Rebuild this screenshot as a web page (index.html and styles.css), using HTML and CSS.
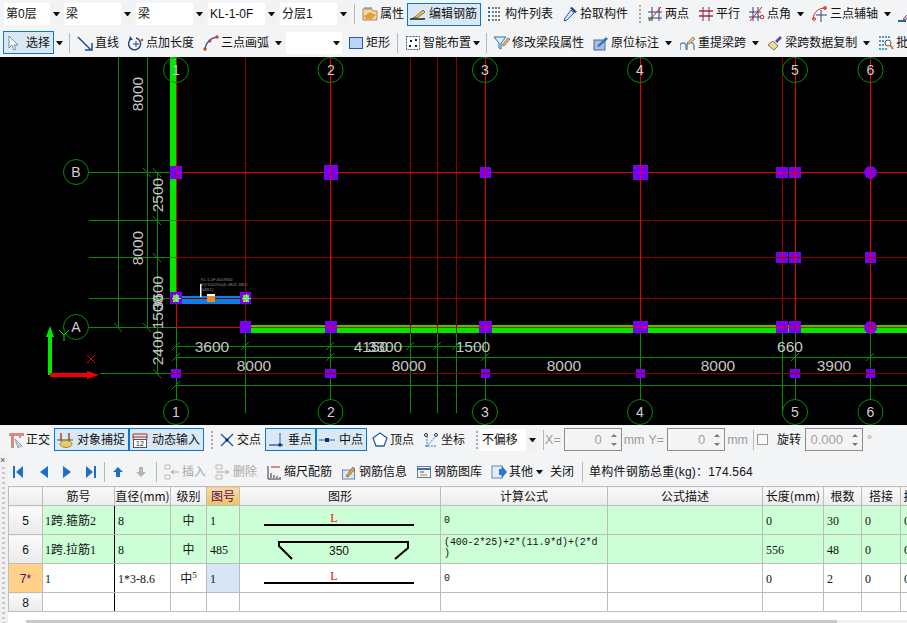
FILE: index.html
```html
<!DOCTYPE html>
<html lang="zh">
<head>
<meta charset="utf-8">
<title>梁 KL-1-0F</title>
<link rel="stylesheet" href="styles.css">
</head>
<body>
<svg class="sprite" xmlns="http://www.w3.org/2000/svg">
  <symbol id="i-prop" viewBox="0 0 16 16"><path d="M1 3h9l1 2h4v9H1z" fill="#f3d9a0" stroke="#a58a5a"/><path d="M2 10l6-4 6 3-4 4H4z" fill="#e0a040"/><path d="M2 2h8" stroke="#777"/></symbol>
  <symbol id="i-edit" viewBox="0 0 16 16"><path d="M0 13h15" stroke="#111" stroke-width="1.4"/><path d="M5 11l8-7 2 2-8 6z" fill="#e8c060" stroke="#7a5a20" stroke-width=".8"/><path d="M2 13l3-2" stroke="#333"/></symbol>
  <symbol id="i-list" viewBox="0 0 16 16"><path d="M5 2h9M5 6h9M5 10h9M5 14h9" stroke="#555" stroke-width="1.4" stroke-dasharray="2 1"/><path d="M1 2h2M1 6h2M1 10h2M1 14h2" stroke="#2f6fb0" stroke-width="2"/></symbol>
  <symbol id="i-drop" viewBox="0 0 16 16"><path d="M10 1l5 5-2 1-5-5z" fill="#1b3a70"/><path d="M9 4l3 3-7 7-3 1 1-3z" fill="#cfe4fa" stroke="#2a5fa0"/></symbol>
  <symbol id="i-two" viewBox="0 0 16 16"><path d="M5 1v14M12 1v14M1 6h14M1 12h14" stroke="#34407a"/><path d="M2 15L14 1" stroke="#d02020"/><circle cx="3" cy="13" r="1.6" fill="#3a9a30"/></symbol>
  <symbol id="i-par" viewBox="0 0 16 16"><path d="M5 1v14M11 1v14" stroke="#34407a"/><path d="M1 5h14M1 10h14" stroke="#c02030" stroke-width="1.3"/></symbol>
  <symbol id="i-ang" viewBox="0 0 16 16"><path d="M4 1v14M9 1v14M0 6h12M0 11h12" stroke="#34407a"/><path d="M1 15L13 1" stroke="#d02020"/><circle cx="13" cy="11" r="1.8" fill="none" stroke="#d02020"/></symbol>
  <symbol id="i-arc3" viewBox="0 0 16 16"><path d="M1 13C2 6 6 2 14 2" fill="none" stroke="#d02020"/><path d="M9 4v12M4 9h11" stroke="#34407a"/><circle cx="13" cy="2" r="1.4" fill="none" stroke="#d02020"/><circle cx="2" cy="13" r="1.4" fill="none" stroke="#d02020"/></symbol>
  <symbol id="i-pen" viewBox="0 0 16 16"><path d="M6 13l7-7 2 2-7 6z" fill="#d8b8c0" stroke="#706080"/><path d="M1 15h8" stroke="#2f5f9f" stroke-width="2"/></symbol>
  <symbol id="i-cursor" viewBox="0 0 16 16"><path d="M3 1v12l3-3 2 5 2-1-2-4h4z" fill="#fff" stroke="#7a8aa0"/></symbol>
  <symbol id="i-line" viewBox="0 0 16 16"><path d="M1 2l13 13" stroke="#1c4f8a" stroke-width="1.5"/><path d="M15 8v7H8" fill="none" stroke="#1c4f8a" stroke-width="1.5"/></symbol>
  <symbol id="i-len" viewBox="0 0 16 16"><path d="M3 4a6 6 0 1 0 5-1" fill="none" stroke="#26456e" stroke-width="1.4"/><path d="M8 6v6M5 9h6" stroke="#26456e"/><path d="M2 1l3 4H1z" fill="#26456e"/><circle cx="14" cy="5" r="1.2" fill="#c04030"/></symbol>
  <symbol id="i-arc" viewBox="0 0 16 16"><path d="M2 14C3 7 8 3 14 2" fill="none" stroke="#2f5f9f" stroke-width="1.3"/><circle cx="14" cy="2" r="1.7" fill="#d04020"/><circle cx="7" cy="6" r="1.5" fill="#d04020"/><circle cx="2" cy="14" r="1.7" fill="#d04020"/></symbol>
  <symbol id="i-rect" viewBox="0 0 16 16"><rect x="1.500" y="2.500" width="13" height="11" fill="#bcd4f4" stroke="#2c58b0"/></symbol>
  <symbol id="i-smart" viewBox="0 0 16 16"><rect x="1.500" y="1.500" width="13" height="13" fill="#fff" stroke="#556" stroke-dasharray="2 1"/><path d="M5 5h2v2H5zM10 4h2v2h-2zM4 10h2v2H4zM10 10h2v2h-2z" fill="#123"/></symbol>
  <symbol id="i-mod" viewBox="0 0 16 16"><path d="M0 2h12L7 8v6l-2-1V8z" fill="#d6ecff" stroke="#2a6fb0"/><path d="M8 10l6-7 2 1-6 7z" fill="#e0c080" stroke="#705020" stroke-width=".7"/></symbol>
  <symbol id="i-mark" viewBox="0 0 16 16"><rect x="1" y="5" width="11" height="10" fill="#a8bede" stroke="#4a6a9a"/><path d="M4 11l9-9 2 2-9 8z" fill="#2f78c8"/></symbol>
  <symbol id="i-span" viewBox="0 0 16 16"><path d="M0 15v-4a3 3 0 0 1 6 0v4M7 15v-4a3 3 0 0 1 7 0v4" fill="none" stroke="#6c8cb0" stroke-width="1.5"/><path d="M7 8l6-6 2 2-6 5z" fill="#e8c890" stroke="#806030" stroke-width=".7"/></symbol>
  <symbol id="i-brush" viewBox="0 0 16 16"><path d="M1 10l5-4 5 5-4 4z" fill="#e8dca0" stroke="#8a7a40"/><path d="M8 6l5-5 2 2-5 5z" fill="#5a4ea0"/></symbol>
  <symbol id="i-batch" viewBox="0 0 16 16"><path d="M1 2h12M1 6h6M1 10h6M1 14h8" stroke="#2f78a8" stroke-width="1.4" stroke-dasharray="2 1"/><circle cx="10" cy="8" r="3" fill="#fff" stroke="#555"/><path d="M12 10l3 4" stroke="#b08030" stroke-width="2"/></symbol>
  <symbol id="i-ortho" viewBox="0 0 16 16"><path d="M1 1h15v3h-3v2h-2V4H6v12H3V4H1z" fill="#d88a80"/><path d="M7 7l7 7-3 1-1 1z" fill="#c8d4e0" stroke="#7a8a9a" stroke-width=".7"/></symbol>
  <symbol id="i-snap" viewBox="0 0 16 16"><path d="M4 1v8M12 1v8" stroke="#a03020" stroke-width="1.3"/><path d="M0 8h16" stroke="#553"/><ellipse cx="9" cy="12" rx="6" ry="3.500" fill="#e8c870" stroke="#a88a30"/></symbol>
  <symbol id="i-input" viewBox="0 0 16 16"><path d="M1 2h14M1 2v5M15 2v5M1 5h14" stroke="#a03020"/><rect x="1.500" y="7.500" width="13" height="8" fill="#fff" stroke="#555"/><text x="8" y="14" class="ictext">12</text></symbol>
  <symbol id="i-cross" viewBox="0 0 16 16"><path d="M2 2l12 12M14 2L2 14" stroke="#2a5fa8" stroke-width="1.500"/><rect x="6.500" y="6.500" width="3" height="3" fill="#1a2a70"/></symbol>
  <symbol id="i-perp" viewBox="0 0 16 16"><path d="M1 13h14" stroke="#2a5fa8" stroke-width="1.400"/><path d="M12 1v13" stroke="#2a5fa8"/><rect x="10.500" y="11.500" width="3" height="3" fill="#1a2a70"/></symbol>
  <symbol id="i-mid" viewBox="0 0 16 16"><path d="M0 8h16" stroke="#5a7fb8" stroke-width="1.400"/><rect x="6" y="6" width="4" height="4" fill="#1a2a70"/></symbol>
  <symbol id="i-vert" viewBox="0 0 16 16"><path d="M8 1l7 5-3 8H4L1 6z" fill="#fff" stroke="#2a5fa8" stroke-width="1.300"/></symbol>
  <symbol id="i-coord" viewBox="0 0 16 16"><path d="M2 14h12M4 15V3M4 14l9-10" stroke="#2a7fc8" stroke-dasharray="2 1"/><circle cx="13" cy="3" r="1.500" fill="none" stroke="#333"/><circle cx="3" cy="3" r="1.500" fill="none" stroke="#333"/></symbol>
  <symbol id="i-ins" viewBox="0 0 16 16"><path d="M1 1h5v4H1zM1 11h5v4H1z" fill="none" stroke="#bbb"/><path d="M15 8H7M10 6L7 8l3 2" fill="none" stroke="#aaa"/></symbol>
  <symbol id="i-del" viewBox="0 0 16 16"><path d="M1 1h6v4H1zM1 11h6v4H1z" fill="none" stroke="#bbb"/><path d="M1 8h12M11 6l3 2-3 2" fill="none" stroke="#aaa"/></symbol>
  <symbol id="i-scale" viewBox="0 0 16 16"><path d="M2 2v13M2 15h13" stroke="#333"/><path d="M5 3h9" stroke="#c02020"/><path d="M5 14V9M8 14v-3M11 14v-2M14 14v-1" stroke="#556" stroke-width="1.200"/></symbol>
  <symbol id="i-info" viewBox="0 0 16 16"><rect x="1.500" y="6" width="12" height="9" fill="#dbe6f2" stroke="#6a86a8"/><path d="M5 12l7-9 2 2-7 8z" fill="#e8a050" stroke="#7a5020" stroke-width=".7"/></symbol>
  <symbol id="i-lib" viewBox="0 0 16 16"><rect x="1.500" y="2.500" width="13" height="11" fill="#eef3f9" stroke="#5a7fa8"/><path d="M2 5h12" stroke="#3a6fa8" stroke-width="2"/><path d="M4 8h4" stroke="#b03020"/><path d="M4 11h7" stroke="#b08a20"/></symbol>
  <symbol id="i-other" viewBox="0 0 16 16"><rect x="1" y="2" width="10" height="12" fill="#e4ecf6" stroke="#6a86a8"/><path d="M8 5h3V2l5 6-5 6v-3H8z" fill="#2f78c8"/></symbol>
</svg>

<div class="bar bar-top">
  <div class="combo w58"><span class="combo-text">第0层</span><span class="combo-btn"><i class="caret"></i></span></div>
  <div class="combo w69 ml2"><span class="combo-text">梁</span><span class="combo-btn"><i class="caret"></i></span></div>
  <div class="combo w69 ml3"><span class="combo-text">梁</span><span class="combo-btn"><i class="caret"></i></span></div>
  <div class="combo w69 ml3"><span class="combo-text">KL-1-0F</span><span class="combo-btn"><i class="caret"></i></span></div>
  <div class="combo w69 ml3"><span class="combo-text">分层1</span><span class="combo-btn"><i class="caret"></i></span></div>
  <i class="sep ml5"></i>
  <span class="tool ml7"><svg class="ic"><use href="#i-prop"/></svg>属性</span>
  <span class="tool active w74 ml3"><svg class="ic"><use href="#i-edit"/></svg>编辑钢筋</span>
  <span class="tool ml6"><svg class="ic"><use href="#i-list"/></svg>构件列表</span>
  <span class="tool ml9"><svg class="ic"><use href="#i-drop"/></svg>拾取构件</span>
  <i class="grip ml11"></i>
  <span class="tool ml6"><svg class="ic"><use href="#i-two"/></svg>两点</span>
  <span class="tool ml9"><svg class="ic"><use href="#i-par"/></svg>平行</span>
  <span class="tool ml9"><svg class="ic"><use href="#i-ang"/></svg>点角</span>
  <i class="caret ml6"></i>
  <span class="tool ml8"><svg class="ic"><use href="#i-arc3"/></svg>三点辅轴</span>
  <i class="caret ml6"></i>
  <span class="tool ml6"><svg class="ic"><use href="#i-pen"/></svg></span>
</div>

<div class="bar bar-second">
  <span class="tool active w51"><svg class="ic"><use href="#i-cursor"/></svg><span class="pad-select">选择</span></span>
  <i class="caret ml2"></i>
  <i class="sep ml6"></i>
  <span class="tool ml7"><svg class="ic"><use href="#i-line"/></svg>直线</span>
  <span class="tool ml9"><svg class="ic"><use href="#i-len"/></svg>点加长度</span>
  <span class="tool ml9"><svg class="ic"><use href="#i-arc"/></svg>三点画弧</span>
  <i class="caret ml6"></i>
  <div class="combo w56 ml4"><span class="combo-text"></span><span class="combo-btn plain"><i class="caret"></i></span></div>
  <span class="tool ml6"><svg class="ic"><use href="#i-rect"/></svg>矩形</span>
  <i class="sep ml7"></i>
  <span class="tool ml7"><svg class="ic"><use href="#i-smart"/></svg>智能布置</span>
  <i class="caret ml2"></i>
  <i class="sep ml6"></i>
  <span class="tool ml7"><svg class="ic"><use href="#i-mod"/></svg>修改梁段属性</span>
  <span class="tool ml9"><svg class="ic"><use href="#i-mark"/></svg>原位标注</span>
  <i class="caret ml6"></i>
  <span class="tool ml8"><svg class="ic"><use href="#i-span"/></svg>重提梁跨</span>
  <i class="caret ml6"></i>
  <span class="tool ml8"><svg class="ic"><use href="#i-brush"/></svg>梁跨数据复制</span>
  <i class="caret ml6"></i>
  <span class="tool ml8"><svg class="ic"><use href="#i-batch"/></svg>批量识别</span>
</div>

<svg class="cad" viewBox="0 57 907 368" xmlns="http://www.w3.org/2000/svg">
  <g class="beam-green">
    <rect x="170" y="57" width="7" height="236"/>
    <rect x="251" y="325" width="656" height="8"/>
  </g>
  <rect class="beam-blue" x="172" y="296" width="76" height="8"/>

  <g class="ln-green">
    <path d="M118.500 57V328M147.500 57V328M157.500 172V375"/>
    <path d="M89 172.500H177M89 220.500H177M89 257.500H177M89 298.500H170M89 327.500H177M100 373.500H177"/>
    <path d="M177 346.500H485M177 357.500H907M177 385.500H907"/>
    <path d="M176.500 328V400M245.500 320V413M330.500 333V400M410.500 333V413M437.500 333V413M456.500 333V413M485.500 333V400M640.500 333V400M782.500 333V412M795.500 333V400M870.500 333V400"/>
    <path class="tick" d="M143 168l8 9M153 168l8 9M153 216l8 9M153 253l8 9M114 323l8 9M143 323l8 9M153 369l8 9"/>
    <path class="tick" d="M172 350l8-8M172 361l8-8M172 389l8-8M241 350l8-8M326 350l8-8M326 361l8-8M406 350l8-8M433 350l8-8M452 350l8-8M481 361l8-8M791 361l8-8M866 361l8-8"/>
  </g>
  <g class="ln-dark">
    <path d="M245.500 57V320M410.500 57V333M437.500 57V333M456.500 57V333M782.500 57V333"/>
    <path d="M177 220.500H907M177 257.500H907M170 298.500H907M177 373.500H907"/>
  </g>
  <g class="ln-red">
    <path d="M176.500 57V328M330.500 57V333M485.500 57V333M640.500 57V333M795.500 57V333M870.500 57V333"/>
    <path d="M177 172.500H907M177 327.500H907"/>
  </g>

  <g class="col">
    <rect x="170" y="166" width="12" height="13"/><rect x="324" y="165" width="14" height="15"/>
    <rect x="480" y="167" width="11" height="11"/><rect x="633" y="165" width="15" height="15"/>
    <rect x="776" y="167" width="12" height="11"/><rect x="789" y="167" width="12" height="11"/>
    <circle cx="870.500" cy="172.500" r="6.500"/>
    <rect x="776" y="252" width="12" height="11"/><rect x="789" y="252" width="12" height="11"/><rect x="865" y="252" width="11" height="11"/>
    <rect x="170" y="292" width="12" height="12"/><rect x="240" y="292" width="11" height="12"/>
    <rect x="240" y="321" width="11" height="12"/><rect x="325" y="321" width="12" height="12"/>
    <rect x="479" y="321" width="13" height="12"/><rect x="633" y="321" width="15" height="12"/>
    <rect x="776" y="321" width="12" height="12"/><rect x="789" y="321" width="12" height="12"/>
    <circle cx="870.500" cy="327.500" r="6.500"/>
    <rect x="171" y="369" width="10" height="9"/><rect x="325" y="369" width="11" height="9"/>
    <rect x="481" y="369" width="9" height="9"/><rect x="636" y="369" width="9" height="9"/>
    <rect x="790" y="369" width="10" height="9"/><rect x="866" y="369" width="9" height="9"/>
  </g>
  <g class="ln-red">
    <path d="M176.500 160V186M330.500 160V186M485.500 160V186M640.500 160V186M795.500 160V186M870.500 160V186M776 172.500H801M795.500 252V263M782.500 252V263M870.500 252V263M776 327.500H801M870.500 320V334"/>
  </g>
  <g class="ln-dark">
    <path d="M776 257.500H801M865 257.500H876M170 298.500H182M240 298.500H251M171 373.500H181M325 373.500H336M481 373.500H490M636 373.500H645M790 373.500H800M866 373.500H875"/>
  </g>
  <path class="beam-line" d="M251 327.500H907"/>

  <path class="sel-in" d="M173 295h6v7h-6zM243 295h6v7h-6z"/>
  <path class="sel-cross" d="M172 298.500h9M176.500 294v8M242 298.500h9M246.500 294v8"/>
  <rect class="tag-o" x="207" y="294" width="8" height="8"/>
  <rect class="tag-w" x="207" y="294" width="8" height="2"/>
  <rect class="tag-w" x="200" y="284" width="1.500" height="13"/>
  <g class="tiny">
    <text x="201" y="281">KL-1-0F 400X800</text>
    <text x="201" y="286">8@100/200(4) 4B22 4B22</text>
    <text x="201" y="291">G4B12</text>
  </g>

  <g class="bubble">
    <circle cx="176" cy="70" r="12.500"/><circle cx="330.500" cy="70" r="12.500"/><circle cx="485" cy="70" r="12.500"/>
    <circle cx="640" cy="70" r="12.500"/><circle cx="795" cy="70" r="12.500"/><circle cx="870.500" cy="70" r="12.500"/>
    <circle cx="176" cy="412" r="12.500"/><circle cx="330.500" cy="412" r="12.500"/><circle cx="485" cy="412" r="12.500"/>
    <circle cx="640" cy="412" r="12.500"/><circle cx="795" cy="412" r="12.500"/><circle cx="870.500" cy="412" r="12.500"/>
    <circle cx="76" cy="172" r="12.500"/><circle cx="76" cy="327" r="12.500"/>
  </g>
  <g class="cad-label">
    <text x="176" y="75">1</text><text x="331" y="75">2</text><text x="485" y="75">3</text>
    <text x="640" y="75">4</text><text x="795" y="75">5</text><text x="870.500" y="75">6</text>
    <text x="176" y="417">1</text><text x="331" y="417">2</text><text x="485" y="417">3</text>
    <text x="640" y="417">4</text><text x="795" y="417">5</text><text x="870.500" y="417">6</text>
    <text x="76" y="177">B</text><text x="76" y="332">A</text>
  </g>
  <g class="dim">
    <text x="212" y="352">3600</text><text x="371" y="352">4150</text><text x="385" y="352">3300</text>
    <text x="473" y="352">1500</text><text x="790" y="352">660</text>
    <text x="254" y="371">8000</text><text x="409" y="371">8000</text><text x="564" y="371">8000</text>
    <text x="718" y="371">8000</text><text x="834" y="371">3900</text>
    <text transform="rotate(-90 143 94)" x="143" y="94">8000</text>
    <text transform="rotate(-90 143 248)" x="143" y="248">8000</text>
    <text transform="rotate(-90 163 195)" x="163" y="195">2500</text>
    <text transform="rotate(-90 163 293)" x="163" y="293">3600</text>
    <text transform="rotate(-90 163 312)" x="163" y="312">1500</text>
    <text transform="rotate(-90 163 348)" x="163" y="348">2400</text>
  </g>

  <path class="axis-y" d="M48 375V337H46L50 326 54 337H52V375z"/>
  <path class="axis-x" d="M50 373H87V371L99 375 87 379V377H50z"/>
  <path class="axis-y-l" d="M59 330l5 5 5-5M64 335v6"/>
  <path class="axis-x-l" d="M87 355l8 8M95 355l-8 8"/>
</svg>

<div class="bar bar-snap">
  <span class="tool ml8"><svg class="ic"><use href="#i-ortho"/></svg>正交</span>
  <span class="tool active w75 ml4"><svg class="ic"><use href="#i-snap"/></svg>对象捕捉</span>
  <span class="tool active w75"><svg class="ic"><use href="#i-input"/></svg>动态输入</span>
  <i class="grip ml7"></i>
  <span class="tool ml6"><svg class="ic"><use href="#i-cross"/></svg>交点</span>
  <span class="tool active w51 ml4"><svg class="ic"><use href="#i-perp"/></svg>垂点</span>
  <span class="tool active w51"><svg class="ic"><use href="#i-mid"/></svg>中点</span>
  <span class="tool ml5"><svg class="ic"><use href="#i-vert"/></svg>顶点</span>
  <span class="tool ml9"><svg class="ic"><use href="#i-coord"/></svg>坐标</span>
  <i class="grip ml11"></i>
  <div class="combo w58 ml2"><span class="combo-text tight">不偏移</span><span class="combo-btn"><i class="caret"></i></span></div>
  <i class="sep ml5"></i>
  <span class="muted ml1">X=</span>
  <div class="spin w58 ml3"><span class="spin-val">0</span><span class="spin-btn"><i class="up"></i><i class="down"></i></span></div>
  <span class="muted ml2">mm</span>
  <span class="muted ml4">Y=</span>
  <div class="spin w58 ml3"><span class="spin-val">0</span><span class="spin-btn"><i class="up"></i><i class="down"></i></span></div>
  <span class="muted ml2">mm</span>
  <i class="sep ml5"></i>
  <i class="check ml3"></i>
  <span class="ml9">旋转</span>
  <div class="spin w58 ml4"><span class="spin-val">0.000</span><span class="spin-btn"><i class="up"></i><i class="down"></i></span></div>
  <span class="muted ml4">°</span>
</div>

<div class="lower">
  <div class="strip"><span class="strip-x">×</span></div>
  <div class="panel">
    <div class="bar bar-nav">
      <svg class="nav" viewBox="0 0 10 12"><path d="M0 0h2v12H0zM10 0v12L3 6z"/></svg>
      <svg class="nav ml16" viewBox="0 0 10 12"><path d="M9 0v12L1 6z"/></svg>
      <svg class="nav ml13" viewBox="0 0 10 12"><path d="M1 0v12l8-6z"/></svg>
      <svg class="nav ml14" viewBox="0 0 10 12"><path d="M10 0H8v12h2zM0 0v12l7-6z"/></svg>
      <i class="sep ml8"></i>
      <svg class="nav ml8" viewBox="0 0 10 12"><path d="M5 1l5 5H7v5H3V6H0z"/></svg>
      <svg class="nav off ml13" viewBox="0 0 10 12"><path d="M3 1h4v5h3l-5 5-5-5h3z"/></svg>
      <i class="sep ml10"></i>
      <span class="tool off ml7"><svg class="ic"><use href="#i-ins"/></svg>插入</span>
      <span class="tool off ml9"><svg class="ic"><use href="#i-del"/></svg>删除</span>
      <span class="tool ml9"><svg class="ic"><use href="#i-scale"/></svg>缩尺配筋</span>
      <span class="tool ml9"><svg class="ic"><use href="#i-info"/></svg>钢筋信息</span>
      <span class="tool ml9"><svg class="ic"><use href="#i-lib"/></svg>钢筋图库</span>
      <span class="tool ml9"><svg class="ic"><use href="#i-other"/></svg>其他</span>
      <i class="caret ml3"></i>
      <span class="ml7">关闭</span>
      <i class="sep ml8"></i>
      <span class="ml6 total">单构件钢筋总重(kg)：174.564</span>
    </div>
    <div class="table-wrap">
      <table class="grid">
        <colgroup>
          <col class="c-head"><col class="c-name"><col class="c-dia"><col class="c-grade"><col class="c-fig">
          <col class="c-shape"><col class="c-formula"><col class="c-desc"><col class="c-len"><col class="c-num">
          <col class="c-lap"><col class="c-more">
        </colgroup>
        <thead>
          <tr>
            <th></th><th>筋号</th><th>直径(mm)</th><th>级别</th><th class="th-on">图号</th><th>图形</th><th>计算公式</th>
            <th>公式描述</th><th>长度(mm)</th><th>根数</th><th>搭接</th><th>损耗</th>
          </tr>
        </thead>
        <tbody>
          <tr class="row-green">
            <th>5</th><td class="name">1跨.箍筋2</td><td>8</td><td class="mid">中</td><td>1</td>
            <td class="shape"><svg class="fig" viewBox="0 0 200 28"><path class="fig-line" d="M24 19H174"/><text class="fig-l" x="94" y="16">L</text></svg></td>
            <td class="mono">0</td><td></td><td>0</td><td>30</td><td>0</td><td>0</td>
          </tr>
          <tr class="row-green">
            <th>6</th><td class="name">1跨.拉筋1</td><td>8</td><td class="mid">中</td><td>485</td>
            <td class="shape"><svg class="fig" viewBox="0 0 200 28"><path class="fig-hook" d="M52 24L39 11V7H168V13L155 24"/><text class="fig-n" x="99" y="20">350</text></svg></td>
            <td class="mono formula">(400-2*25)+2*(11.9*d)+(2*d<br>)</td><td></td><td>556</td><td>48</td><td>0</td><td>0</td>
          </tr>
          <tr>
            <th class="th-row">7*</th><td class="name">1</td><td>1*3-8.6</td><td class="mid">中<sup>5</sup></td><td class="cell-on">1</td>
            <td class="shape"><svg class="fig" viewBox="0 0 200 28"><path class="fig-line" d="M24 19H174"/><text class="fig-l" x="94" y="16">L</text></svg></td>
            <td class="mono">0</td><td></td><td>0</td><td>2</td><td>0</td><td>0</td>
          </tr>
          <tr class="row-empty">
            <th>8</th><td></td><td></td><td></td><td></td><td></td><td></td><td></td><td></td><td></td><td></td><td></td>
          </tr>
        </tbody>
      </table>
      <div class="hscroll"><div class="hthumb"></div></div>
    </div>
  </div>
</div>
</body>
</html>
```

FILE: styles.css
```css
* { box-sizing: border-box; }
html, body { margin: 0; height: 100%; }
body {
  width: 907px;
  height: 623px;
  overflow: hidden;
  background: #f0f0f0;
  color: #111;
  font: 12px/16px "Liberation Sans", "Noto Sans CJK SC", sans-serif;
}
.sprite { display: none; }
.ictext { font: 7px "Liberation Sans", sans-serif; text-anchor: middle; fill: #222; }

/* toolbars */
.bar {
  display: flex;
  align-items: center;
  white-space: nowrap;
  overflow: hidden;
  background: #f3f4f5;
}
.bar > * { flex-shrink: 0; }
.bar-top { height: 28px; padding-left: 4px; }
.bar-second { height: 29px; padding-left: 3px; }
.bar-snap { height: 28px; padding-top: 1px; }
.bar-nav { height: 33px; padding-left: 5px; padding-top: 4px; }
.total { letter-spacing: 0.2px; }

.tool { display: inline-flex; align-items: center; gap: 2px; height: 22px; }
.tool.off { color: #a8a8a8; }
.ic { width: 16px; height: 16px; flex: none; }
.active {
  border: 1px solid #0a78d0;
  background: #dae8f4;
  justify-content: flex-end;
  padding-right: 3px;
  gap: 2px;
  height: 23px;
}
.active .ic { margin-right: auto; margin-left: 2px; }
.pad-select { margin-right: 0; }
.w51 { width: 51px; }
.w74 { width: 74px; }
.w75 { width: 75px; }

.combo { display: flex; height: 22px; background: #fff; align-items: stretch; }
.combo-text { flex: 1; padding-left: 2px; line-height: 22px; font-size: 12px; }
.combo-btn { width: 12px; background: #f2f2f2; display: flex; align-items: center; justify-content: center; }
.combo-btn.plain { background: #fff; }
.w56 { width: 56px; }
.w58 { width: 58px; }
.w69 { width: 69px; }
.tight { letter-spacing: -0.2px; }

.caret {
  display: block;
  width: 7px;
  height: 4px;
  border-left: 3.5px solid transparent;
  border-right: 3.5px solid transparent;
  border-top: 4px solid #111;
}
.sep { display: block; width: 1px; height: 20px; background: #b8b8b8; }
.grip {
  display: block;
  width: 2px;
  height: 18px;
  background: repeating-linear-gradient(#aaa 0 2px, transparent 2px 4px);
}

.ml1 { margin-left: 1px; } .ml2 { margin-left: 2px; } .ml3 { margin-left: 3px; }
.ml4 { margin-left: 4px; } .ml5 { margin-left: 5px; } .ml6 { margin-left: 6px; }
.ml7 { margin-left: 7px; } .ml8 { margin-left: 8px; } .ml9 { margin-left: 9px; }
.ml10 { margin-left: 10px; } .ml11 { margin-left: 11px; } .ml13 { margin-left: 13px; }
.ml14 { margin-left: 14px; } .ml16 { margin-left: 16px; }

.muted { color: #9a9a9a; font-size: 12.500px; }
.spin {
  display: flex;
  align-items: center;
  height: 23px;
  background: #f4f4f4;
  border: 1px solid #8a8a8a;
  color: #a0a0a0;
  font-size: 13px;
}
.spin-val { flex: 1; text-align: right; padding-right: 5px; }
.spin-btn { width: 14px; display: flex; flex-direction: column; align-items: center; gap: 6px; }
.up, .down { display: block; width: 0; height: 0; border-left: 3px solid transparent; border-right: 3px solid transparent; }
.up { border-bottom: 3px solid #777; }
.down { border-top: 3px solid #777; }
.check { display: block; width: 11px; height: 11px; border: 1px solid #999; background: #f8f8f8; }

/* drawing */
.cad { display: block; width: 907px; height: 368px; background: #000; }
.beam-green { fill: #00e800; }
.beam-blue { fill: #0c7fe6; }
.ln-green path, .ln-dark path, .ln-red path, .beam-line { fill: none; stroke-width: 1; shape-rendering: crispEdges; }
.ln-green path { stroke: #0b8a0b; }
.ln-green path.tick { shape-rendering: auto; }
.ln-dark path { stroke: #8c0000; }
.ln-red path, .beam-line { stroke: #e60000; }
.col { fill: #7a00f0; }
.sel-in { fill: #8ae000; }
.sel-cross { fill: none; stroke: #5fe8ff; stroke-width: 1; shape-rendering: crispEdges; }
.tag-o { fill: #f08a10; }
.tag-w { fill: #fff; }
.tiny { fill: #8a8a8a; font: 4px "Liberation Sans", sans-serif; }
.bubble circle { fill: none; stroke: #0b8a0b; stroke-width: 1; }
.cad-label { fill: #d0d0d0; font: 14px "Liberation Sans", sans-serif; text-anchor: middle; }
.dim { fill: #c6c6c6; font: 15.500px "Liberation Sans", sans-serif; text-anchor: middle; }
.axis-y { fill: #00e800; }
.axis-x { fill: #f00000; }
.axis-y-l { fill: none; stroke: #00e800; }
.axis-x-l { fill: none; stroke: #f00000; }

/* lower panel */
.lower { display: flex; height: 170px; }
.strip {
  width: 8px;
  flex: none;
  background: repeating-linear-gradient(#c8c8c8 0 2px, transparent 2px 5px) 2px 14px / 3px 100% no-repeat #f0f0f0;
}
.strip-x { display: block; font-size: 9px; line-height: 10px; color: #444; margin-top: 2px; }
.panel { flex: 1; min-width: 0; display: flex; flex-direction: column; }
.nav { width: 10px; height: 12px; fill: #1f6fc4; flex: none; }
.nav.off { fill: #b4b4b4; }

.table-wrap { position: relative; flex: 1; overflow: hidden; background: #fff; }
.grid {
  table-layout: fixed;
  width: 922px;
  border-collapse: collapse;
  font: 12px/14px "Liberation Serif", "Noto Sans CJK SC", serif;
}
.c-head { width: 34px; }
.c-name { width: 72px; }
.c-dia { width: 56px; }
.c-grade { width: 36px; }
.c-fig { width: 33px; }
.c-shape { width: 201px; }
.c-formula { width: 167px; }
.c-desc { width: 155px; }
.c-len { width: 61px; }
.c-num { width: 38px; }
.c-lap { width: 39px; }
.c-more { width: 30px; }

.grid th, .grid td {
  border: 1px solid #bdbdbd;
  padding: 1px 3px 0;
  overflow: hidden;
  white-space: nowrap;
  font-weight: normal;
}
.grid thead tr { height: 19px; }
.grid tbody tr { height: 29px; }
.grid tbody tr.row-empty { height: 19px; }
.grid thead th {
  background: linear-gradient(#fafafa, #ececec);
  text-align: center;
  font-family: "Noto Sans CJK SC", sans-serif;
  padding: 0;
}
.grid thead th.th-on { background: linear-gradient(#f8dc9e, #f0c066); color: #50106a; }
.grid tbody th { background: linear-gradient(#fbfbfb, #eaeaea); text-align: center; padding: 1px 0 0; font-family: "Liberation Sans", sans-serif; }
.grid tbody th.th-row { background: #ffd18a; color: #50106a; }
.row-green td { background: #ccffd6; }
.grid td.cell-on { background: #d6e6f6; }
.grid td:nth-child(2) { border-right-color: #000; }
.grid td.name { padding-left: 2px; }
.mid { text-align: center; }
.mid sup { font-size: 9px; line-height: 0; }
.grid td.shape { padding: 0; }
.fig { display: block; width: 200px; height: 28px; }
.fig-line { fill: none; stroke: #000; stroke-width: 2; }
.fig-hook { fill: none; stroke: #000; stroke-width: 2; }
.fig-l { fill: #f00; font: 12px "Liberation Serif", serif; text-anchor: middle; }
.fig-n { fill: #111; font: 12px "Liberation Sans", sans-serif; text-anchor: middle; }
.mono { font-family: "Liberation Mono", monospace; font-size: 10px; }
.grid td.formula { line-height: 11px; letter-spacing: -0.1px; vertical-align: top; padding-top: 2px; }
.hscroll { position: absolute; left: 18px; right: 0; bottom: 0; height: 3px; background: #f0f0f0; }
.hthumb { width: 811px; height: 3px; background: #c8c8c8; }
```
